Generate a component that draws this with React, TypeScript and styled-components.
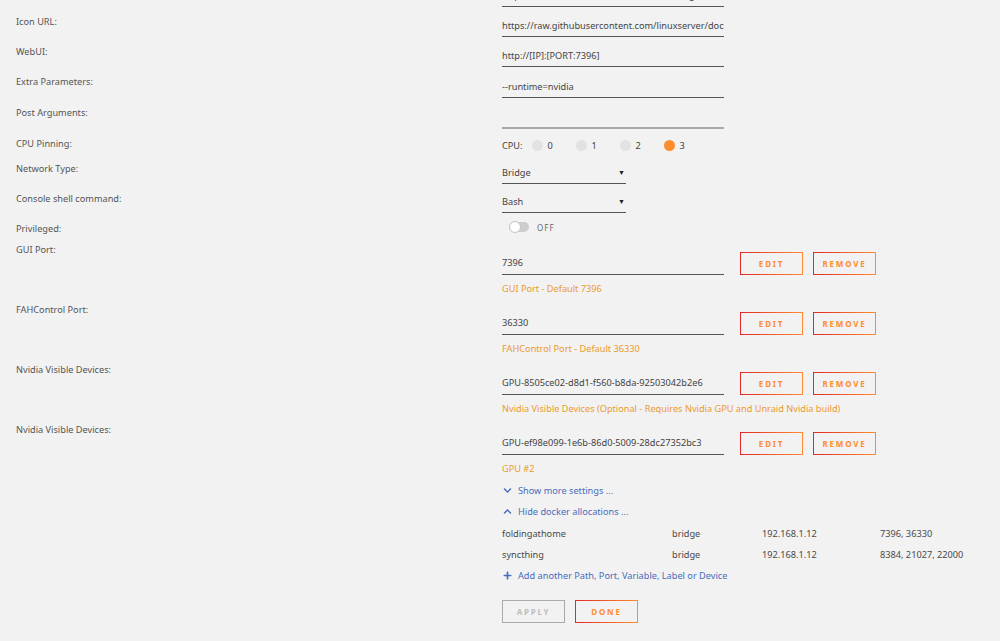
import React from "react";
import styled, { createGlobalStyle } from "styled-components";
import { FaChevronDown, FaChevronUp, FaPlus } from "react-icons/fa";

const Global = createGlobalStyle`
  html, body { margin: 0; padding: 0; background: #f2f2f2; }
  body { font-family: "Noto Sans", "Open Sans", sans-serif; font-size: 9.2px; color: #4f4f4f; overflow: hidden; }
  * { box-sizing: border-box; }
`;

const Page = styled.div`
  padding-left: 16px;
  margin-top: -23px;
  width: 1000px;
  height: 664px;
  overflow: hidden;
`;

const Row = styled.div<{ $h: number }>`
  display: grid;
  grid-template-columns: 486px 1fr;
  height: ${(p) => p.$h}px;
`;

const Label = styled.div<{ $top?: number }>`
  padding-top: ${(p) => p.$top ?? 8}px;
  line-height: 14px;
  color: #555;
`;

const Field = styled.div`
  display: flex;
  align-items: flex-end;
`;

const TextInput = styled.div<{ $light?: boolean }>`
  width: 222px;
  height: 22px;
  line-height: 21px;
  border-bottom: ${(p) => (p.$light ? "2px solid #a9a9a9" : "1px solid #555")};
  color: #444;
  white-space: nowrap;
  overflow: hidden;
`;

const SelectBox = styled.div`
  width: 124px;
  height: 22px;
  line-height: 21px;
  border-bottom: 1px solid #555;
  display: flex;
  justify-content: space-between;
  color: #444;
  padding-right: 1px;
`;

const Caret = styled.span`
  font-size: 7px;
  color: #222;
  line-height: 22px;
`;

const CpuLine = styled.div`
  display: flex;
  align-items: center;
  height: 14px;
  margin-top: 9px;
  color: #444;
`;

const CpuItem = styled.div`
  display: flex;
  align-items: center;
  width: 44px;
`;

const Dot = styled.span<{ $on?: boolean }>`
  width: 11px;
  height: 11px;
  border-radius: 50%;
  background: ${(p) => (p.$on ? "#ff8c2f" : "#e2e2e2")};
  margin-right: 5px;
  display: inline-block;
`;

const CpuLabel = styled.span`
  margin-right: 9px;
`;

const ToggleWrap = styled.div`
  display: flex;
  align-items: center;
  margin-top: 7px;
  padding-left: 7px;
  height: 14px;
`;

const Track = styled.span`
  width: 20px;
  height: 10px;
  border-radius: 5px;
  background: #cdcdcd;
  position: relative;
  display: inline-block;
`;

const Knob = styled.span`
  position: absolute;
  left: 0;
  top: -1px;
  width: 12px;
  height: 12px;
  border-radius: 50%;
  background: #fff;
  border: 1px solid #c4c4c4;
`;

const ToggleText = styled.span`
  margin-left: 8px;
  font-size: 8px;
  letter-spacing: 1px;
  color: #666;
`;

const ConfigBlock = styled.div`
  padding-top: 12px;
`;

const ConfigInput = styled.div`
  width: 222px;
  height: 23px;
  line-height: 22px;
  border-bottom: 1px solid #555;
  color: #444;
  white-space: nowrap;
  overflow: hidden;
`;

const ConfigLine = styled.div`
  display: flex;
  align-items: flex-start;
  gap: 10px;
`;

const Btn = styled.button<{ $disabled?: boolean; $first?: boolean }>`
  margin-left: ${(p) => (p.$first ? 6 : 0)}px;
  width: 63px;
  height: 23px;
  padding: 0;
  font-family: "Noto Sans", sans-serif;
  font-weight: 700;
  font-size: 8px;
  letter-spacing: 1.8px;
  text-transform: uppercase;
  background: transparent;
  border: 1px solid transparent;
  border-image: ${(p) =>
    p.$disabled ? "linear-gradient(90deg, #aaa, #aaa) 1" : "linear-gradient(90deg, #e22828, #ff8c2f) 1"};
  color: ${(p) => (p.$disabled ? "#bcbcbc" : "#ff8c2f")};
  cursor: pointer;
`;

const Desc = styled.div`
  color: #eb9a2e;
  line-height: 14px;
  margin-top: 7px;
`;

const Section = styled.div`
  margin-left: 486px;
`;

const LinkRow = styled.div`
  height: 21px;
  line-height: 21px;
  color: #486dba;
  display: flex;
  align-items: center;
  gap: 6px;
  padding-left: 1px;
  & svg {
    width: 9px;
    height: 9px;
  }
`;

const Table = styled.div`
  padding-top: 1px;
`;

const TRow = styled.div`
  display: grid;
  grid-template-columns: 170px 90px 118px 120px;
  height: 21px;
  line-height: 21px;
  color: #4a4a4a;
`;

const Actions = styled.div`
  display: flex;
  gap: 10px;
  margin-top: 14px;
`;

const textRows: [string, string, boolean?][] = [
  ["", "https://hub.docker.com/r/linuxserver/foldingathome/"],
  ["Icon URL:", "https://raw.githubusercontent.com/linuxserver/docker-templates/master/linuxserver.io/img/foldingathome-logo.png"],
  ["WebUI:", "http://[IP]:[PORT:7396]"],
  ["Extra Parameters:", "--runtime=nvidia"],
  ["Post Arguments:", "", true],
];

const configs = [
  ["GUI Port:", "7396", "GUI Port - Default 7396"],
  ["FAHControl Port:", "36330", "FAHControl Port - Default 36330"],
  [
    "Nvidia Visible Devices:",
    "GPU-8505ce02-d8d1-f560-b8da-92503042b2e6",
    "Nvidia Visible Devices (Optional - Requires Nvidia GPU and Unraid Nvidia build)",
  ],
  ["Nvidia Visible Devices:", "GPU-ef98e099-1e6b-86d0-5009-28dc27352bc3", "GPU #2"],
];

const allocations = [
  ["foldingathome", "bridge", "192.168.1.12", "7396, 36330"],
  ["syncthing", "bridge", "192.168.1.12", "8384, 21027, 22000"],
];

export default function App() {
  return (
    <>
      <Global />
      <Page>
        {textRows.map(([label, value, light], i) => (
          <Row key={i} $h={i === 0 ? 30 : i > 2 ? 31 : 30}>
            <Label>{label}</Label>
            <Field>
              <TextInput $light={light}>{value}</TextInput>
            </Field>
          </Row>
        ))}
        <Row $h={26}>
          <Label>CPU Pinning:</Label>
          <CpuLine>
            <CpuLabel>CPU:</CpuLabel>
            {[0, 1, 2, 3].map((n) => (
              <CpuItem key={n}>
                <Dot $on={n === 3} />
                {n}
              </CpuItem>
            ))}
          </CpuLine>
        </Row>
        <Row $h={29}>
          <Label $top={7}>Network Type:</Label>
          <Field>
            <SelectBox>
              Bridge<Caret>▼</Caret>
            </SelectBox>
          </Field>
        </Row>
        <Row $h={29}>
          <Label>Console shell command:</Label>
          <Field>
            <SelectBox>
              Bash<Caret>▼</Caret>
            </SelectBox>
          </Field>
        </Row>
        <Row $h={27}>
          <Label $top={9}>Privileged:</Label>
          <ToggleWrap>
            <Track>
              <Knob />
            </Track>
            <ToggleText>OFF</ToggleText>
          </ToggleWrap>
        </Row>
        {configs.map(([label, value, desc], i) => (
          <Row key={i} $h={60}>
            <Label $top={3}>{label}</Label>
            <ConfigBlock>
              <ConfigLine>
                <ConfigInput>{value}</ConfigInput>
                <Btn $first>Edit</Btn>
                <Btn>Remove</Btn>
              </ConfigLine>
              <Desc>{desc}</Desc>
            </ConfigBlock>
          </Row>
        ))}
        <Section>
          <LinkRow>
            <FaChevronDown />
            Show more settings ...
          </LinkRow>
          <LinkRow>
            <FaChevronUp />
            Hide docker allocations ...
          </LinkRow>
          <Table>
            {allocations.map((r) => (
              <TRow key={r[0]}>
                {r.map((c, j) => (
                  <span key={j}>{c}</span>
                ))}
              </TRow>
            ))}
          </Table>
          <LinkRow>
            <FaPlus />
            Add another Path, Port, Variable, Label or Device
          </LinkRow>
          <Actions>
            <Btn $disabled>Apply</Btn>
            <Btn>Done</Btn>
          </Actions>
        </Section>
      </Page>
    </>
  );
}
